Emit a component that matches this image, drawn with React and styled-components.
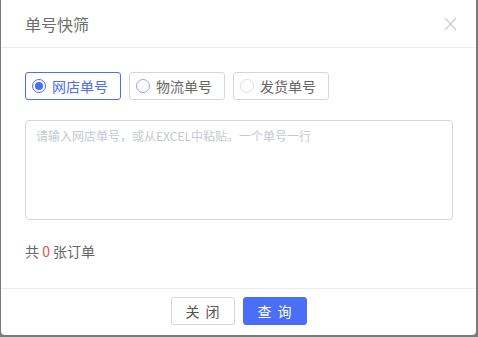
import React, { useState } from "react";
import styled, { createGlobalStyle } from "styled-components";

const GlobalStyle = createGlobalStyle`
  html, body {
    margin: 0;
    padding: 0;
    background: #7a7a7a;
    font-family: "Noto Sans CJK SC", "Noto Sans", sans-serif;
  }
`;

const Backdrop = styled.div`
  width: 478px;
  height: 337px;
  padding: 0 2px 2px 1px;
  box-sizing: border-box;
  overflow: hidden;
`;

const Modal = styled.div`
  height: 335px;
  background: #fff;
  border-radius: 0 0 4px 4px;
  display: flex;
  flex-direction: column;
`;

const Header = styled.div`
  height: 47px;
  border-bottom: 1px solid #e9ebef;
  display: flex;
  align-items: center;
  justify-content: space-between;
  padding: 0 19px 0 24px;
  .title {
    font-size: 16px;
    color: #6e6e6e;
  }
`;

const CloseIcon = () => (
  <svg width="13" height="14" viewBox="0 0 13 14">
    <path d="M1 1 L12 13 M12 1 L1 13" stroke="#c8ccd4" strokeWidth="1.2" fill="none" />
  </svg>
);

const Body = styled.div`
  flex: 1;
  padding: 24px 24px 0 24px;
`;

const RadioGroup = styled.div`
  display: flex;
  gap: 8px;
`;

const RadioBox = styled.label`
  width: 96px;
  height: 28px;
  box-sizing: border-box;
  border: 1px solid ${(p) => (p.checked ? "#4a6ef5" : "#d3d6de")};
  border-radius: 3px;
  display: flex;
  align-items: center;
  padding-left: 6px;
  gap: 6px;
  font-size: 14px;
  color: ${(p) => (p.checked ? "#4a6ef5" : "#666")};
  cursor: pointer;
`;

const Dot = styled.span`
  width: 14px;
  height: 14px;
  box-sizing: border-box;
  border-radius: 50%;
  border: 1px solid ${(p) => p.ring};
  display: flex;
  align-items: center;
  justify-content: center;
  &::after {
    content: "";
    width: 8px;
    height: 8px;
    border-radius: 50%;
    background: ${(p) => (p.checked ? "#4a6ef5" : "transparent")};
  }
`;

const TextArea = styled.textarea`
  display: block;
  margin-top: 20px;
  width: 428px;
  height: 100px;
  box-sizing: border-box;
  border: 1px solid #d3d6de;
  border-radius: 4px;
  padding: 6px 10px;
  resize: none;
  outline: none;
  font-family: "Noto Sans CJK SC", sans-serif;
  font-size: 12px;
  &::placeholder {
    color: #c5c9d2;
  }
`;

const Count = styled.div`
  margin-top: 21px;
  font-size: 14px;
  color: #666;
  line-height: 20px;
  .num {
    color: #f5483b;
  }
`;

const Footer = styled.div`
  height: 47px;
  border-top: 1px solid #e9ebef;
  display: flex;
  justify-content: center;
  gap: 8px;
  padding-top: 8px;
  box-sizing: border-box;
`;

const Button = styled.button`
  width: 64px;
  height: 28px;
  border-radius: 3px;
  font-family: "Noto Sans CJK SC", sans-serif;
  font-size: 14px;
  letter-spacing: 6px;
  text-indent: 6px;
  border: 1px solid ${(p) => (p.primary ? "#4a6ef5" : "#d3d6de")};
  background: ${(p) => (p.primary ? "#4a6ef5" : "#fff")};
  color: ${(p) => (p.primary ? "#fff" : "#555")};
  cursor: pointer;
`;

const options = [
  { key: "shop", label: "网店单号", ring: "#4a6ef5" },
  { key: "logistics", label: "物流单号", ring: "#8fa5f4" },
  { key: "ship", label: "发货单号", ring: "#dcdfe5" },
];

export default function App() {
  const [type, setType] = useState("shop");
  return (
    <>
      <GlobalStyle />
      <Backdrop>
        <Modal>
          <Header>
            <span className="title">单号快筛</span>
            <CloseIcon />
          </Header>
          <Body>
            <RadioGroup>
              {options.map((o) => (
                <RadioBox key={o.key} checked={type === o.key} onClick={() => setType(o.key)}>
                  <Dot ring={o.ring} checked={type === o.key} />
                  {o.label}
                </RadioBox>
              ))}
            </RadioGroup>
            <TextArea placeholder="请输入网店单号，或从EXCEL中粘贴。一个单号一行" />
            <Count>
              共 <span className="num">0</span> 张订单
            </Count>
          </Body>
          <Footer>
            <Button>关闭</Button>
            <Button primary>查询</Button>
          </Footer>
        </Modal>
      </Backdrop>
    </>
  );
}
